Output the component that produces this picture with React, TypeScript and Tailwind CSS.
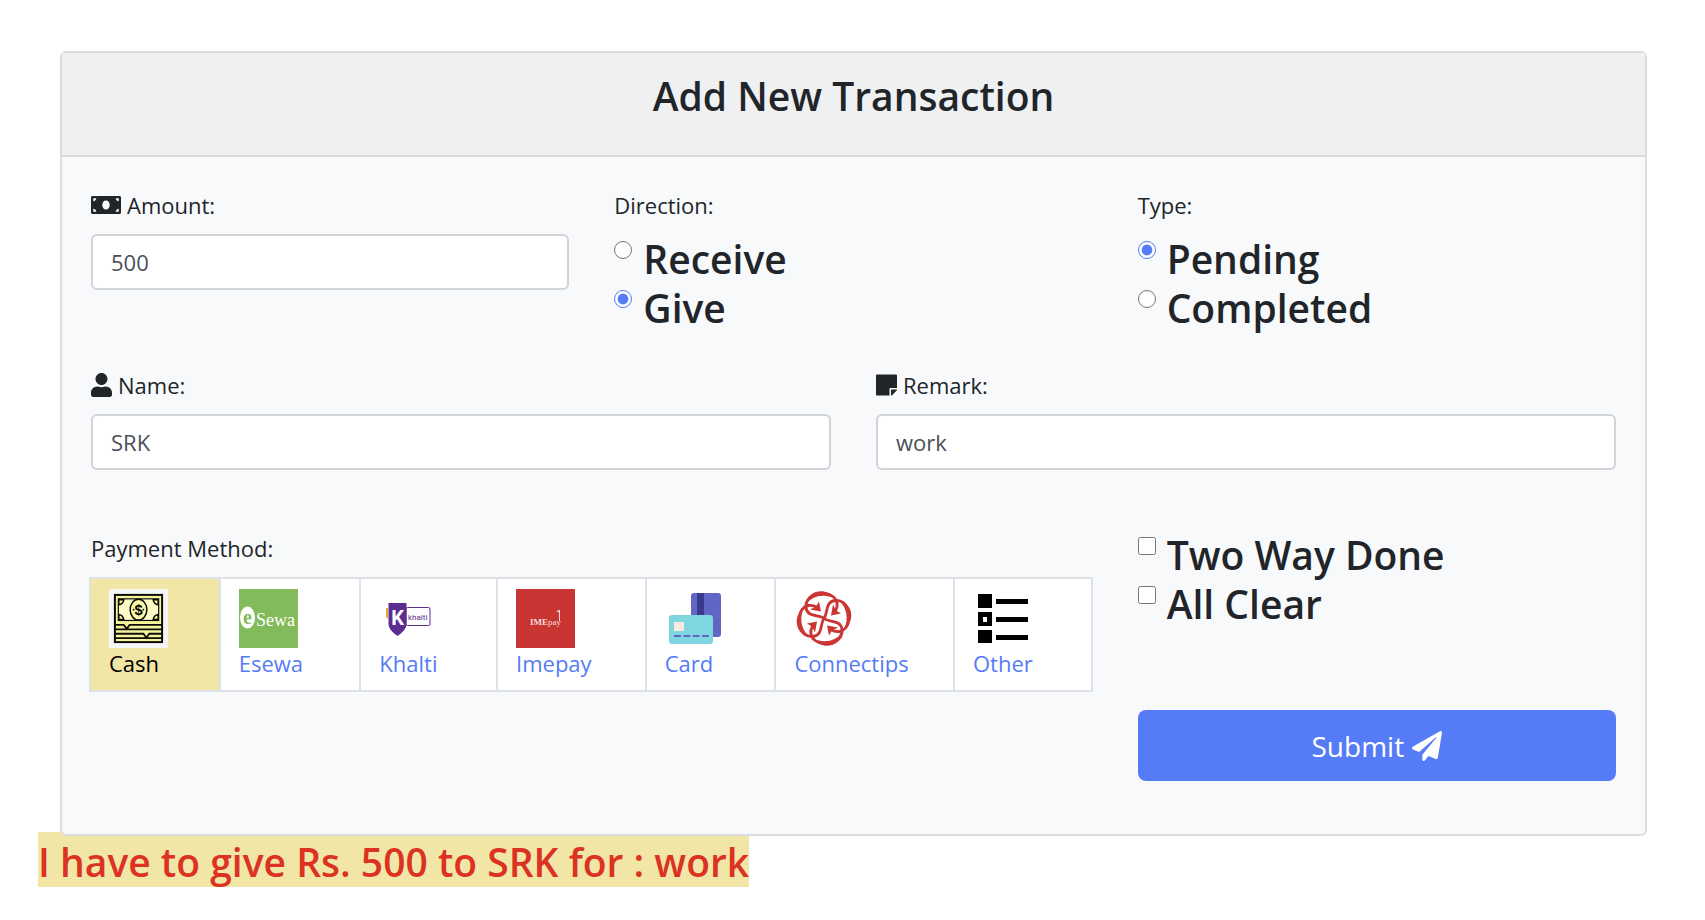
import React from "react";
import { FaMoneyBill, FaUser, FaStickyNote, FaPaperPlane } from "react-icons/fa";

const SANS = "font-['Open_Sans','Noto_Sans',sans-serif]";

function CashLogo() {
  return (
    <svg viewBox="0 0 60 60" className="size-[59px]" aria-hidden="true">
      <rect width="60" height="60" fill="#f5f5f5" />
      <g fill="#f6f49a" stroke="#0b0b0b" strokeWidth="2">
        <rect x="6" y="6" width="48" height="48" />
        <rect x="9.500" y="10" width="41" height="22" fill="#fdfcc4" strokeWidth="1.200" />
      </g>
      <path d="M10 11h5a6 6 0 0 1-5 5zM50 11h-5a6 6 0 0 0 5 5zM10 31h5a6 6 0 0 0-5-5zM50 31h-5a6 6 0 0 1 5-5z" fill="#f6f49a" stroke="#0b0b0b" strokeWidth="1.500" />
      <ellipse cx="30" cy="21" rx="8.500" ry="10.500" fill="#fbf9a8" stroke="#0b0b0b" strokeWidth="1.500" />
      <text x="30" y="26.500" textAnchor="middle" fontSize="15" fontWeight="700" fontFamily="Liberation Sans, sans-serif">$</text>
      <circle cx="25" cy="21" r="0.900" />
      <circle cx="35" cy="21" r="0.900" />
      <path d="M6 36.500h9l3 4 3-4h33M6 41h48M6 45.500h29l3 4 3-4h13M6 50h48" fill="none" stroke="#0b0b0b" strokeWidth="1.800" />
    </svg>
  );
}

function EsewaLogo() {
  return (
    <svg viewBox="0 0 59 59" className="size-[59px]" aria-hidden="true">
      <rect width="59" height="59" fill="#82bb59" />
      <ellipse cx="8.500" cy="28.500" rx="7.500" ry="11" fill="#fff" />
      <text x="8.500" y="35" textAnchor="middle" fontSize="20" fontWeight="700" fill="#82bb59" fontFamily="Liberation Serif, serif">e</text>
      <text x="17" y="37" fontSize="18" fill="#fff" fontFamily="Liberation Serif, serif">Sewa</text>
    </svg>
  );
}

function KhaltiLogo() {
  return (
    <svg viewBox="0 0 59 59" className="size-[59px]" aria-hidden="true">
      <path d="M7 19h2v11l-2-2z" fill="#e8a83a" />
      <rect x="27" y="18.500" width="24" height="18" rx="1.500" fill="#fff" stroke="#5c2d91" />
      <path d="M9.500 14h18v21q0 6-9 12-9-6-9-12z" fill="#5c2d91" />
      <text x="18.500" y="36" textAnchor="middle" fontSize="20" fontWeight="700" fill="#fff" fontFamily="Roboto, sans-serif">K</text>
      <text x="29" y="31" fontSize="8" fill="#5c2d91" fontFamily="Roboto, sans-serif">khalti</text>
    </svg>
  );
}

function ImepayLogo() {
  return (
    <svg viewBox="0 0 59 59" className="size-[59px]" aria-hidden="true">
      <rect width="59" height="59" fill="#c93532" />
      <text x="14" y="36" fontSize="9" fill="#f7dcdc" fontFamily="Liberation Serif, serif">
        <tspan fontWeight="700">IME</tspan>pay
      </text>
      <path d="M43.500 21v11" fill="none" stroke="#f7dcdc" />
      <path d="M40 22l4-1v3z" fill="#f7dcdc" />
    </svg>
  );
}

function CardLogo() {
  return (
    <svg viewBox="0 0 59 59" className="size-[59px]" aria-hidden="true">
      <rect x="26" y="4" width="30" height="44" rx="3" fill="#6165c3" />
      <path d="M32 4h7v26h-7z" fill="#393990" />
      <rect x="4" y="26" width="44" height="29" rx="3" fill="#7fd6e1" />
      <rect x="9" y="33" width="10" height="9" fill="#faebe1" />
      <path d="M9 47h35" stroke="#6165c3" strokeWidth="2" strokeDasharray="7 2.300" />
    </svg>
  );
}

function ConnectipsLogo() {
  return (
    <svg viewBox="0 0 59 59" className="size-[59px]" aria-hidden="true">
      {[0, 90, 180, 270].map((angle) => (
        <g key={angle} transform={`translate(30 29.5) rotate(${angle})`}>
          <path d="M-7-11C-13-15-19-13-22-9C-28-1-25 19-11 18C-1 17-4 5 0 0" fill="none" stroke="#cb3533" strokeWidth="2.800" />
          <path d="M-20-11C-31-3-30 15-14 19C-23 11-25 0-20-11Z" fill="#cb3533" />
          <path d="M-5-17L-3-7L-14-9L-8-12Z" fill="#cb3533" />
        </g>
      ))}
    </svg>
  );
}

function OtherLogo() {
  return (
    <svg viewBox="0 0 59 59" className="size-[59px]" aria-hidden="true">
      <path d="M5 5h14v14H5zM5 23h14v14H5zM5 41h14v13H5zM23 10h32v5H23zM23 28h32v5H23zM23 46h32v5H23z" />
      <path d="M10 28h4v5h-4z" fill="#fff" />
    </svg>
  );
}

const METHODS = [
  { name: "Cash", Logo: CashLogo },
  { name: "Esewa", Logo: EsewaLogo },
  { name: "Khalti", Logo: KhaltiLogo },
  { name: "Imepay", Logo: ImepayLogo },
  { name: "Card", Logo: CardLogo },
  { name: "Connectips", Logo: ConnectipsLogo },
  { name: "Other", Logo: OtherLogo },
];

function Choice({ id, label, ...input }: { id: string; label: string } & React.InputHTMLAttributes<HTMLInputElement>) {
  return (
    <div className="flex items-start">
      <input id={id} {...input} className="mt-[7px] size-[18px] shrink-0 accent-[#557bf7]" />
      <label htmlFor={id} className="pl-[11px] text-[39px] leading-[49px] font-semibold">
        {label}
      </label>
    </div>
  );
}

function Field({ id, label, icon, value, onChange }: { id: string; label: string; icon: React.ReactNode; value: string; onChange: (value: string) => void }) {
  return (
    <div>
      <label htmlFor={id} className="mb-[11px] flex items-center gap-[6px] leading-9">
        {icon}
        {label}
      </label>
      <input
        id={id}
        value={value}
        onChange={(event) => onChange(event.target.value)}
        className="block h-14 w-full rounded-md border-2 border-[#d0d4d9] bg-white px-[18px] text-[#495057] outline-none"
      />
    </div>
  );
}

export default function App() {
  const [amount, setAmount] = React.useState("500");
  const [name, setName] = React.useState("SRK");
  const [remark, setRemark] = React.useState("work");
  const [direction, setDirection] = React.useState("give");
  const [method, setMethod] = React.useState("Cash");

  return (
    <div className={`min-h-screen bg-white pt-[51px] pr-9 pl-[38px] text-[22px] text-[#212529] ${SANS}`}>
      <main className="relative z-10 mx-[22px] rounded-md border-2 border-[#dadcdf] bg-[#f8f9fb]">
        <header className="border-b-2 border-[#d6d8da] bg-[#eff0f2] pt-[18px] pb-[35px] text-center">
          <h1 className="text-[39px] leading-[49px] font-semibold">Add New Transaction</h1>
        </header>
        <form className="px-[29px] pt-[30px] pb-[53px]" onSubmit={(event) => event.preventDefault()}>
          <div className="grid grid-cols-3 gap-x-[45px]">
            <Field id="amount" label="Amount:" icon={<FaMoneyBill className="size-[30px]" />} value={amount} onChange={setAmount} />
            <fieldset>
              <legend className="mb-[11px] leading-9">Direction:</legend>
              <Choice id="receive" label="Receive" type="radio" name="direction" checked={direction === "receive"} onChange={() => setDirection("receive")} />
              <Choice id="give" label="Give" type="radio" name="direction" checked={direction === "give"} onChange={() => setDirection("give")} />
            </fieldset>
            <fieldset>
              <legend className="mb-[11px] leading-9">Type:</legend>
              <Choice id="pending" label="Pending" type="radio" name="type" defaultChecked />
              <Choice id="completed" label="Completed" type="radio" name="type" />
            </fieldset>
          </div>
          <div className="mt-[35px] grid grid-cols-2 gap-x-[45px]">
            <Field id="name" label="Name:" icon={<FaUser className="h-6 w-[21px]" />} value={name} onChange={setName} />
            <Field id="remark" label="Remark:" icon={<FaStickyNote className="h-6 w-[21px]" />} value={remark} onChange={setRemark} />
          </div>
          <div className="mt-[60px] grid grid-cols-3 gap-x-[45px]">
            <div className="col-span-2">
              <p id="method-label" className="mb-[11px] leading-9">Payment Method:</p>
              <div
                role="group"
                aria-labelledby="method-label"
                className="-ml-[2px] grid grid-cols-[128fr_141fr_137fr_149fr_130fr_179fr_138fr] border-2 border-[#dee2e6] bg-white"
              >
                {METHODS.map(({ name: label, Logo }) => (
                  <button
                    key={label}
                    type="button"
                    aria-pressed={method === label}
                    onClick={() => setMethod(label)}
                    className="flex h-[111px] flex-col items-start border-l-2 border-[#dee2e6] pt-[10px] pl-[18px] text-[#557bf7] first:border-l-0 aria-pressed:bg-[#f2e6a6] aria-pressed:text-black"
                  >
                    <Logo />
                    <span className="leading-[30px]">{label}</span>
                  </button>
                ))}
              </div>
            </div>
            <div>
              <Choice id="two-way" label="Two Way Done" type="checkbox" />
              <Choice id="all-clear" label="All Clear" type="checkbox" />
              <button type="submit" className="mt-[82px] flex h-[71px] w-full items-center justify-center gap-2 rounded-lg bg-[#557bf7] text-[28px] text-white">
                Submit
                <FaPaperPlane className="size-[30px]" />
              </button>
            </div>
          </div>
        </form>
      </main>
      <p className="-mt-1 w-fit bg-[#f2e6a6] pt-1 text-[39px] leading-[51px] font-semibold text-[#db3222]">
        I have to give Rs. {amount} to {name} for : {remark}
      </p>
    </div>
  );
}
